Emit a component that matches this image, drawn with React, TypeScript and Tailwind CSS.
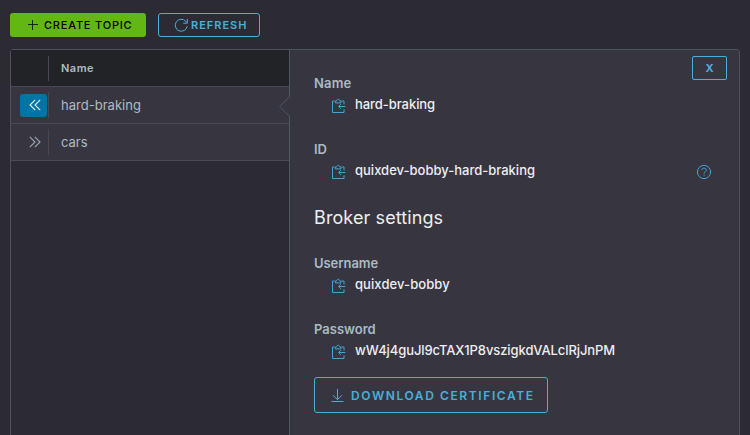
import React from "react";

function ClipboardIcon() {
  return (
    <svg width="14" height="16" viewBox="0 0 14 16" fill="none" stroke="#42a5d6" strokeWidth="1" className="mt-[4px] shrink-0">
      <path d="M2.6 3H.5v11.5h11.5v-3.2M9.6 3H12v3.4" />
      <path d="M3.4 4.9V3h1.2C4.8.7 7.6.7 7.8 3H9v1.9z" />
      <path d="M13.3 8.5H6.9M9 6.1 6.6 8.5 9 10.9" />
    </svg>
  );
}

function Chevrons({ flip = false, color }: { flip?: boolean; color: string }) {
  return (
    <svg width="12" height="12" viewBox="0 0 12 12" fill="none" stroke={color} strokeWidth="1.1" className={flip ? "rotate-180" : ""}>
      <path d="M.8.8 6 6 .8 11.2M5.8.8 11 6 5.8 11.2" />
    </svg>
  );
}

function Field({ label, value, labelTracking, tracking, help = false }: { label: string; value: string; labelTracking: string; tracking: string; help?: boolean }) {
  return (
    <div className="flex h-[66px] flex-col gap-[3px]">
      <div className={`h-[18px] text-[13px] font-semibold leading-[18px] text-[#acbac3] ${labelTracking}`}>{label}</div>
      <div className="flex h-[18px] items-center pl-[18px]">
        <ClipboardIcon />
        <span className={`ml-[9px] whitespace-nowrap text-[13px] font-medium leading-[18px] text-[#eeeef1] ${tracking}`}>{value}</span>
        {help && (
          <svg width="16" height="16" viewBox="0 0 16 16" fill="none" stroke="#42a5d6" strokeWidth="1" className="ml-auto mr-[27px] mt-[3px]">
            <circle cx="8" cy="8" r="6.6" />
            <path d="M5.7 6.1c.1-2.6 4.7-2.5 4.7.1 0 1.6-2.3 1.4-2.3 3.3M8.1 10.4v1.2" />
          </svg>
        )}
      </div>
    </div>
  );
}

export default function App() {
  return (
    <div className="flex h-[435px] w-[750px] flex-col overflow-hidden bg-[#2c2b34] pl-[10px] pt-[13px] font-['Inter',sans-serif]">
      <div className="flex h-6 shrink-0 gap-3">
        <button className="flex h-6 w-[136px] items-center rounded-[3px] bg-[#62b715] pl-[18px] text-[11px] font-medium text-black">
          <svg width="10" height="10" viewBox="0 0 10 10" stroke="#142606" strokeWidth="1"><path d="M0 4.5h10M4.5 0v10" /></svg>
          <span className="ml-[6px] whitespace-nowrap tracking-[0.8px]">CREATE TOPIC</span>
        </button>
        <button className="flex h-6 w-[102px] items-center rounded-[3px] border border-[#49afd9] pl-[15px] text-[11px] font-semibold text-[#49afd9]">
          <svg width="15" height="15" viewBox="0 0 15 15" fill="none" stroke="#49afd9" strokeWidth="1"><path d="M13.2 8.2A6 6 0 1 1 11.7 3.2L13.2 4.8M13.3 1v4.2H9.2" /></svg>
          <span className="ml-[2px] whitespace-nowrap tracking-[0.98px]">REFRESH</span>
        </button>
      </div>
      <div className="mt-3 flex h-[400px] w-[730px] shrink-0 rounded-t-[3px] border border-[#4b545e]">
        <div className="w-[278px] shrink-0 text-[13px] text-[#adbbc4]">
          <div className="flex h-[37px] items-center border-b border-[#494753] bg-[#222327]">
            <div className="h-[25px] w-[38px] border-r border-[#494753]" />
            <span className="ml-3 text-[11px] font-semibold tracking-[0.5px]">Name</span>
          </div>
          <div className="flex h-[37px] items-center border-b border-[#4b4a57] bg-[#373640]">
            <div className="flex h-[26px] w-[38px] items-center border-r border-[#494753] pl-[9px]">
              <div className="flex h-[23px] w-[27px] shrink-0 items-center justify-center rounded-[3px] bg-[#0074a5] pl-[3px]"><Chevrons flip color="#e6f6ff" /></div>
            </div>
            <span className="ml-3 mt-[2px] tracking-[0.02px]">hard-braking</span>
          </div>
          <div className="flex h-[37px] items-center border-b border-[#4b4a57] bg-[#373640]">
            <div className="flex h-[26px] w-[38px] items-center border-r border-[#494753] pl-[18px]"><Chevrons color="#9ba8b2" /></div>
            <span className="ml-3 mt-[2px]">cars</span>
          </div>
        </div>
        <div className="relative flex w-[450px] flex-col border-l border-[#4b5965] bg-[#373640] pl-6 pt-6">
          <svg width="11" height="21" viewBox="0 0 11 21" className="absolute -left-[11px] top-[46px]">
            <path d="M10.5.5.8 10.5l9.7 10" fill="#373640" stroke="#4b5965" />
            <path d="M10.5 1v19" stroke="#373640" />
          </svg>
          <button className="absolute right-[12px] top-[6px] h-6 w-[35px] rounded-[2px] border border-[#49afd9] text-[11px] font-bold leading-[22px] text-[#49afd9]">X</button>
          <Field label="Name" value="hard-braking" labelTracking="tracking-[0.15px]" tracking="tracking-[-0.06px]" />
          <Field label="ID" value="quixdev-bobby-hard-braking" labelTracking="tracking-normal" tracking="tracking-normal" help />
          <h2 className="mb-[24px] mt-0 h-6 text-[18px] font-normal leading-6 text-[#eeeef1] tracking-[0.1px]">Broker settings</h2>
          <Field label="Username" value="quixdev-bobby" labelTracking="tracking-[-0.05px]" tracking="tracking-[0.08px]" />
          <Field label="Password" value="wW4j4guJl9cTAX1P8vszigkdVALclRjJnPM" labelTracking="tracking-normal" tracking="tracking-[-0.1px]" />
          <button className="-mt-[9px] flex h-9 w-[234px] shrink-0 items-center rounded-[3px] border border-[#49afd9] pl-[16px] text-[12px] font-semibold text-[#49afd9]">
            <svg width="13" height="14" viewBox="0 0 13 14" fill="none" stroke="#49afd9" className="mt-px"><path d="M6.5 0v10.5M2 6.2l4.5 4.5L11 6.2M.5 12.5h12" /></svg>
            <span className="ml-[7px] whitespace-nowrap pt-px tracking-[1.6px]">DOWNLOAD CERTIFICATE</span>
          </button>
        </div>
      </div>
    </div>
  );
}
